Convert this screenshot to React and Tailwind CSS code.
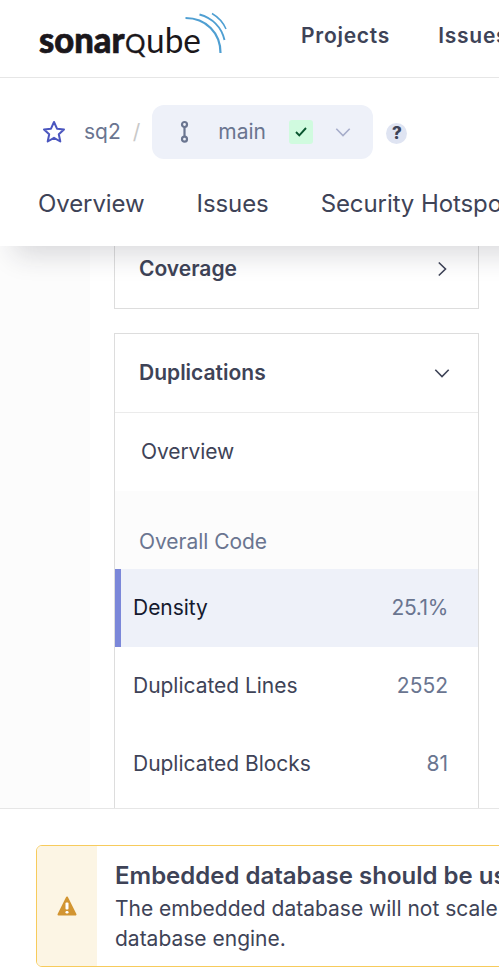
function Logo() {
  return (
    <svg width="200" height="60" viewBox="0 0 200 60" className="block" aria-label="sonarqube">
      <g fill="#1b171b" fontFamily="Lato, sans-serif">
        <text x="8" y="52.500" fontSize="35.500" fontWeight="900" stroke="#1b171b" strokeWidth="0.700" textLength="85.500" lengthAdjust="spacingAndGlyphs">sonar</text>
        <text x="94" y="52.500" fontSize="27.500" fontWeight="400" stroke="#1b171b" strokeWidth="0.300" textLength="20.500" lengthAdjust="spacingAndGlyphs">Q</text>
        <text x="115" y="52.500" fontSize="35.500" fontWeight="400" textLength="55" lengthAdjust="spacingAndGlyphs">ube</text>
      </g>
      <g fill="none" stroke="#4f9fd2">
        <path d="M154.500 18 C175 18 189.500 33 189.500 53" strokeWidth="2.2" />
        <path d="M168.500 14.500 C181 18 190.500 27 193.500 40" strokeWidth="1.9" />
        <path d="M181 13.500 C187 17 192 22 195 29" strokeWidth="1.500" />
      </g>
    </svg>
  );
}

function Chevron({ className, right = false }) {
  return (
    <svg viewBox="0 0 16 16" className={className} fill="none" stroke="currentColor" strokeWidth="1.600">
      <path d={right ? "M4.800 1.500 L11.500 8 L4.800 14.500" : "M1.300 4.800 L8 11.500 L14.700 4.800"} />
    </svg>
  );
}

function Measure({ label, value, active = false }) {
  return (
    <div className={`flex h-[78px] items-center justify-between border-l-[6px] pr-[30px] pl-3 ${active ? "border-[#7b87d9] bg-[#eef1f9] text-[#151a2e]" : "border-transparent"}`}>
      <span className="tracking-[-0.03px]">{label}</span>
      <span className={`text-[#6a7590] ${active ? "tracking-[-0.4px]" : ""}`}>{value}</span>
    </div>
  );
}

export default function App() {
  return (
    <div className="flex h-[976px] w-[499px] flex-col overflow-hidden bg-white font-['Inter',sans-serif] text-[21px] leading-[30px] text-[#3e4357]">
      <header className="flex h-[78px] shrink-0 border-b border-[#e6e6e6] pl-[31px]">
        <div className="w-[270px] shrink-0"><Logo /></div>
        <nav className="flex gap-12 pt-[21px] font-semibold tracking-[0.75px]">
          <span>Projects</span>
          <span>Issues</span>
        </nav>
      </header>

      <section className="relative z-10 h-[168px] w-[600px] shrink-0 bg-white shadow-[0_23px_26px_-14px_rgba(29,33,47,0.16)]">
        <div className="flex items-center pt-[27px] pl-[42px] text-[#6a7590]">
          <svg width="24" height="24" viewBox="0 0 24 24" fill="none" stroke="#4b56bf" strokeWidth="2" strokeLinejoin="round">
            <path d="M12 2 L15 8.700 L22 9.400 L16.800 14.200 L18.300 21.500 L12 17.800 L5.700 21.500 L7.200 14.200 L2 9.400 L9 8.700 Z" />
          </svg>
          <span className="ml-[18px]">sq2</span>
          <span className="ml-[12px] text-[#c9c9c9]">/</span>
          <div className="ml-[12px] flex h-[54px] w-[221px] items-center rounded-xl bg-[#eef1f9] pl-[26px]">
            <svg width="12" height="24" viewBox="0 0 12 24" fill="none" stroke="currentColor" strokeWidth="2.2">
              <circle cx="6.500" cy="4.500" r="2.500" />
              <circle cx="6.500" cy="19.200" r="2.500" />
              <path d="M6.500 7 V16.500" />
            </svg>
            <span className="ml-[28px]">main</span>
            <span className="ml-[23px] flex size-6 items-center justify-center rounded-[3px] bg-[#d0fbdf]">
              <svg width="12" height="10" viewBox="0 0 12 10" fill="none" stroke="#09552f" strokeWidth="1.900">
                <path d="M1 5 L4.300 8.300 L11 1" />
              </svg>
            </span>
            <Chevron className="ml-[22px] size-4 text-[#a6adca]" />
          </div>
          <span className="mt-[2px] ml-[13px] flex size-[21px] items-center justify-center rounded-full bg-[#dfe4f2] text-[17px] font-extrabold text-[#3e4357]">?</span>
        </div>
        <nav className="flex gap-[52px] pt-[30px] pl-[38px] text-[24px] tracking-[-0.09px] whitespace-nowrap">
          <span>Overview</span>
          <span>Issues</span>
          <span>Security Hotspots</span>
        </nav>
      </section>

      <main className="flex min-h-0 flex-1 overflow-hidden">
        <div className="w-[90px] shrink-0 bg-[#fcfcfc]" />
        <div className="flex w-[389px] shrink-0 flex-col gap-6 pl-6">
          <div className="flex h-[63px] shrink-0 items-start justify-between border border-t-0 border-[#dddddd] pt-[8px] pr-7 pl-6 font-semibold">
            <span>Coverage</span>
            <Chevron right className="mt-[7px] size-4" />
          </div>
          <div className="flex shrink-0 flex-col border border-[#dddddd]">
            <div className="flex h-[79px] items-center justify-between border-b border-[#ebebeb] pr-7 pl-6 font-semibold">
              <span>Duplications</span>
              <Chevron className="size-4" />
            </div>
            <div className="flex h-[78px] items-center pl-[26px] tracking-[-0.08px]">Overview</div>
            <div className="flex h-[78px] items-end bg-[#fcfcfc] pb-3 pl-6 tracking-[-0.04px] text-[#6a7590]">Overall Code</div>
            <Measure label="Density" value="25.1%" active />
            <Measure label="Duplicated Lines" value="2552" />
            <Measure label="Duplicated Blocks" value="81" />
            <div className="h-[78px]" />
          </div>
        </div>
      </main>

      <footer className="h-[168px] shrink-0 border-t border-[#e6e6e6] pt-9 pl-9">
        <div className="flex h-[122px] w-[520px] overflow-hidden rounded-md border border-[#f7cb5c]">
          <div className="flex w-[60px] shrink-0 items-center justify-center bg-[#fcf5e4]">
            <svg width="20" height="20" viewBox="0 0 20 20">
              <path d="M10 1.500 L18.500 18.500 H1.500 Z" fill="#d29532" stroke="#d29532" strokeWidth="2" strokeLinejoin="round" />
              <rect x="8.500" y="6.500" width="3" height="7" rx="1" fill="white" />
              <rect x="8.500" y="15" width="3" height="2.500" rx="1.200" fill="white" />
            </svg>
          </div>
          <div className="flex flex-col pt-[13px] pl-[18px] whitespace-nowrap">
            <strong className="mb-[2px] text-[24px] leading-[33px] font-semibold">Embedded database should be used</strong>
            <span>The embedded database will not scale</span>
            <span>database engine.</span>
          </div>
        </div>
      </footer>
    </div>
  );
}
